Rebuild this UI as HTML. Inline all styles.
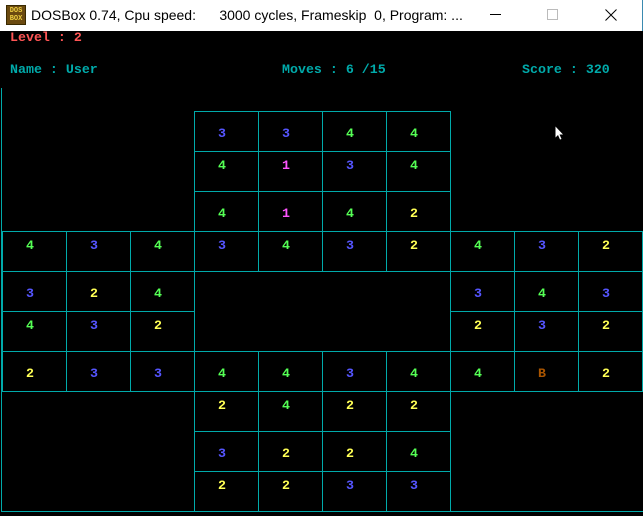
<!DOCTYPE html>
<html><head><meta charset="utf-8"><style>
*{margin:0;padding:0;box-sizing:border-box}
body{width:643px;height:516px;background:#000;position:relative;overflow:hidden;font-family:"Liberation Mono",monospace}
#tb{position:absolute;left:0;top:0;width:643px;height:31px;background:#fff;border-right:1px solid #3a8ab0}
#tb .t{position:absolute;left:31px;top:7px;font:14px "Liberation Sans",sans-serif;color:#000;white-space:pre}
.ic{position:absolute;left:6px;top:5px;width:20px;height:20px;background:#6b4a10;border:1px solid #3a2a00;color:#f0d040;font:bold 7px/8px "Liberation Mono",monospace;text-align:center;padding-top:1px}
.h{position:absolute;height:1px;background:#00aaaa}
.v{position:absolute;width:1px;background:#00aaaa}
.d{position:absolute;width:16px;margin-left:-8px;text-align:center;font-size:13.3px;line-height:16px;font-weight:bold}
.s{position:absolute;font-size:13.3px;line-height:16px;white-space:pre;font-weight:bold}
</style></head><body>
<div id="tb"><div class="ic">DOS<br>BOX</div><div class="t">DOSBox 0.74, Cpu speed:      3000 cycles, Frameskip  0, Program: ...</div>
<div style="position:absolute;left:490px;top:14px;width:11px;height:1px;background:#000"></div>
<div style="position:absolute;left:547px;top:9px;width:11px;height:11px;border:1px solid #bbb"></div>
<svg style="position:absolute;left:605px;top:9px" width="12" height="12"><path d="M0.5 0.5L11.5 11.5M11.5 0.5L0.5 11.5" stroke="#000" stroke-width="1"/></svg>
</div>
<div class="s" style="left:10px;top:30px;color:#ff5555">Level : 2</div>
<div class="s" style="left:10px;top:62px;color:#00aaaa">Name : User</div>
<div class="s" style="left:282px;top:62px;color:#00aaaa">Moves : 6 /15</div>
<div class="s" style="left:522px;top:62px;color:#00aaaa">Score : 320</div>
<svg style="position:absolute;left:555px;top:126px" width="10" height="16"><path d="M0.5 0.5V11.5L3 9L5 13.5L6.5 13L4.5 8.5H8Z" fill="#fff"/></svg>
<div id="g"></div>
<script>
var g=document.getElementById('g'),h='';
function H(x1,x2,y){h+='<div class="h" style="left:'+x1+'px;top:'+y+'px;width:'+(x2-x1+1)+'px"></div>';}
function V(x,y1,y2){h+='<div class="v" style="left:'+x+'px;top:'+y1+'px;height:'+(y2-y1+1)+'px"></div>';}
[111,151,191,431,471].forEach(function(y){H(194,450,y)});
[231,271,351,391,511].forEach(function(y){H(2,642,y)});
H(2,194,311);H(450,642,311);
[194,258,322,386,450].forEach(function(x){V(x,111,231);V(x,351,511)});
[2,66,130,194,258,322,386,450,514,578,642].forEach(function(x){V(x,231,271)});
[2,66,130,194,450,514,578,642].forEach(function(x){V(x,271,351)});
[2,66,130,194,258,322,386,450,514,578,642].forEach(function(x){V(x,351,391)});
V(1,88,511);
var C={'1':'#ff55ff','2':'#ffff55','3':'#5555ff','4':'#55ff55','B':'#aa5500'};
var xs=[30,94,158,222,286,350,414,478,542,606];
var rows=[[134,'   3344   '],[166,'   4134   '],[214,'   4142   '],[246,'4343432432'],[294,'324    343'],[326,'432    232'],[374,'233443444B2'.slice(0,9)+'2'],[406,'   2422   '],[454,'   3224   '],[486,'   2233   ']];
rows[6][1]='23344344B2';
rows.forEach(function(r){for(var i=0;i<10;i++){var c=r[1][i];if(c!=' ')h+='<div class="d" style="left:'+xs[i]+'px;top:'+(r[0]-8)+'px;color:'+C[c]+'">'+c+'</div>';}});
g.innerHTML=h;
</script>
</body></html>
